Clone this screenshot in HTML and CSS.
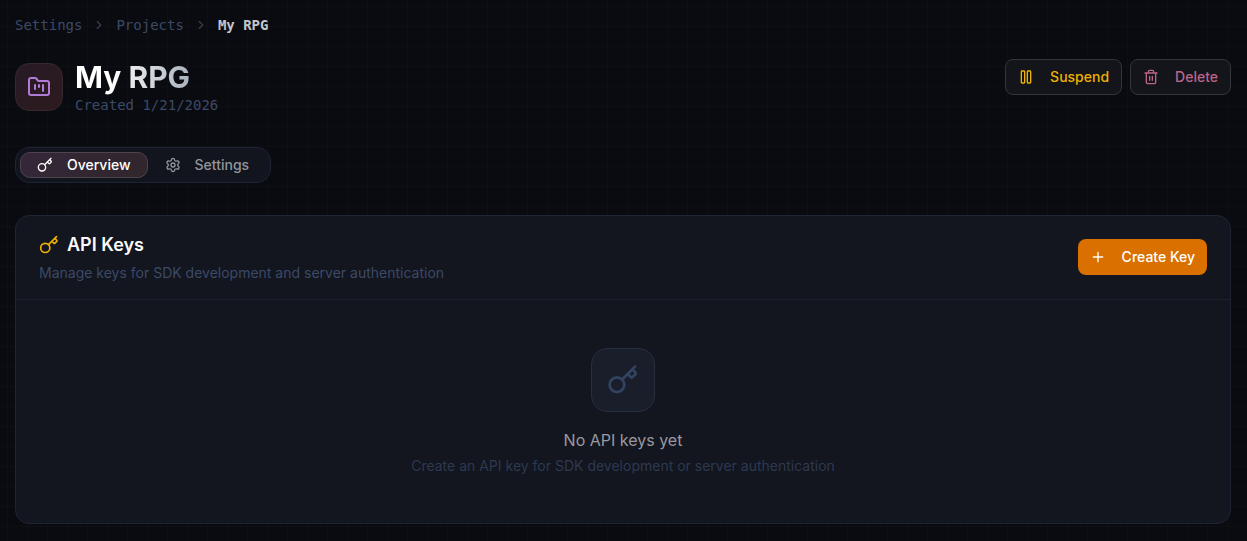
FILE: index.html
```html
<!DOCTYPE html>
<html lang="en">
<head>
    <meta charset="UTF-8">
    <meta name="viewport" content="width=device-width, initial-scale=1.0">
    <title>My RPG - Projects</title>
    <link rel="stylesheet" href="styles.css">
</head>
<body>
    <!-- Shared icons -->
    <svg class="icon-defs" aria-hidden="true">
        <symbol id="icon-key" viewBox="0 0 24 24">
            <circle cx="7.5" cy="15.5" r="5.5"/>
            <path d="m21 2-9.6 9.6M15.5 7.5l2.3 2.3a1 1 0 0 0 1.4 0l2.1-2.1a1 1 0 0 0 0-1.4L19 4"/>
        </symbol>
        <symbol id="icon-chevron" viewBox="0 0 24 24">
            <path d="m9 18 6-6-6-6"/>
        </symbol>
    </svg>

    <main class="page">
        <nav class="breadcrumb" aria-label="Breadcrumb">
            <a href="#settings">Settings</a>
            <svg class="icon-sm"><use href="#icon-chevron"/></svg>
            <a href="#projects">Projects</a>
            <svg class="icon-sm"><use href="#icon-chevron"/></svg>
            <span class="current">My RPG</span>
        </nav>

        <header class="project-header">
            <div class="project-info">
                <div class="project-icon">
                    <svg class="icon-lg" viewBox="0 0 24 24">
                        <path d="M4 20h16a2 2 0 0 0 2-2V8a2 2 0 0 0-2-2h-7.9a2 2 0 0 1-1.7-.9l-.8-1.2A2 2 0 0 0 7.9 3H4a2 2 0 0 0-2 2v13c0 1.1.9 2 2 2ZM8 10v4M12 10v2M16 10v6"/>
                    </svg>
                </div>
                <div>
                    <h1>My RPG</h1>
                    <p class="created">Created 1/21/2026</p>
                </div>
            </div>
            <div class="actions">
                <button type="button" class="btn btn-suspend">
                    <svg class="icon" viewBox="0 0 24 24">
                        <rect x="5" y="3" width="5" height="18" rx="1"/>
                        <rect x="14" y="3" width="5" height="18" rx="1"/>
                    </svg>
                    Suspend
                </button>
                <button type="button" class="btn btn-delete">
                    <svg class="icon" viewBox="0 0 24 24">
                        <path d="M3 6h18M19 6v14a2 2 0 0 1-2 2H7a2 2 0 0 1-2-2V6M8 6V4a2 2 0 0 1 2-2h4a2 2 0 0 1 2 2v2M10 11v6M14 11v6"/>
                    </svg>
                    Delete
                </button>
            </div>
        </header>

        <div class="tabs" role="tablist">
            <button type="button" class="tab active" role="tab" aria-selected="true">
                <svg class="icon"><use href="#icon-key"/></svg>
                Overview
            </button>
            <button type="button" class="tab" role="tab" aria-selected="false">
                <svg class="icon" viewBox="0 0 24 24">
                    <path d="M9.67 4.14a2.34 2.34 0 0 1 4.66 0 2.34 2.34 0 0 0 3.32 1.91 2.34 2.34 0 0 1 2.33 4.04 2.34 2.34 0 0 0 0 3.82 2.34 2.34 0 0 1-2.33 4.04 2.34 2.34 0 0 0-3.32 1.91 2.34 2.34 0 0 1-4.66 0 2.34 2.34 0 0 0-3.32-1.91 2.34 2.34 0 0 1-2.33-4.04 2.34 2.34 0 0 0 0-3.82 2.34 2.34 0 0 1 2.33-4.04 2.34 2.34 0 0 0 3.32-1.91Z"/>
                    <circle cx="12" cy="12" r="3"/>
                </svg>
                Settings
            </button>
        </div>

        <section class="card">
            <div class="card-header">
                <div>
                    <h2>
                        <svg class="icon-md"><use href="#icon-key"/></svg>
                        API Keys
                    </h2>
                    <p class="description">Manage keys for SDK development and server authentication</p>
                </div>
                <button type="button" class="btn btn-create">
                    <svg class="icon" viewBox="0 0 24 24"><path d="M5 12h14M12 5v14"/></svg>
                    Create Key
                </button>
            </div>
            <div class="empty">
                <div class="empty-icon">
                    <svg class="icon-xl"><use href="#icon-key"/></svg>
                </div>
                <p class="empty-title">No API keys yet</p>
                <p class="empty-text">Create an API key for SDK development or server authentication</p>
            </div>
        </section>
    </main>
</body>
</html>
```
FILE: styles.css
```css
* {
    box-sizing: border-box;
}

body {
    margin: 0;
    min-height: 100vh;
    background-color: #0a0b10;
    background-image:
        linear-gradient(rgba(255, 255, 255, 0.016) 1px, transparent 1px),
        linear-gradient(90deg, rgba(255, 255, 255, 0.016) 1px, transparent 1px);
    background-size: 20px 20px;
    background-position: 7px 6px;
    color: #fafafa;
    font-family: Inter, sans-serif;
    font-size: 14px;
    line-height: 20px;
}

h1, h2, p {
    margin: 0;
}

svg {
    flex-shrink: 0;
    fill: none;
    stroke: currentColor;
    stroke-width: 2;
    stroke-linecap: round;
    stroke-linejoin: round;
}

.icon-defs {
    display: none;
}

.icon-sm {
    width: 14px;
    height: 14px;
}

.icon {
    width: 16px;
    height: 16px;
}

.icon-md {
    width: 20px;
    height: 20px;
}

.icon-lg {
    width: 24px;
    height: 24px;
}

.icon-xl {
    width: 32px;
    height: 32px;
}

.page {
    padding: 15px 16px 17px 15px;
}

/* Breadcrumb */
.breadcrumb {
    display: flex;
    align-items: center;
    gap: 10px;
    margin-bottom: 24px;
    color: #334155;
    font-family: "DejaVu Sans Mono", monospace;
}

.breadcrumb a {
    color: #3b4a66;
    text-decoration: none;
}

.breadcrumb .current {
    color: #c4c6ca;
    font-weight: 700;
}

/* Project header */
.project-header {
    display: flex;
    align-items: flex-start;
    justify-content: space-between;
    margin-bottom: 32px;
}

.project-info {
    display: flex;
    align-items: center;
    gap: 12px;
}

.project-icon {
    display: flex;
    align-items: center;
    justify-content: center;
    width: 48px;
    height: 48px;
    border: 1px solid #38272f;
    border-radius: 14px;
    background: linear-gradient(135deg, #281b28, #2c1a1c);
    color: #b07cd8;
}

h1 {
    width: fit-content;
    background: linear-gradient(90deg, #fff 30%, #a9b2bd);
    background-clip: text;
    -webkit-background-clip: text;
    color: transparent;
    font-size: 30px;
    font-weight: 700;
    line-height: 36px;
}

.created {
    color: #3b4a66;
    font-family: "DejaVu Sans Mono", monospace;
}

.actions {
    display: flex;
    gap: 8px;
}

.btn {
    display: inline-flex;
    align-items: center;
    gap: 16px;
    height: 36px;
    padding: 0 12px;
    border: 1px solid #34353b;
    border-radius: 8px;
    background: #14151a;
    font: 500 14px/20px Inter, sans-serif;
    cursor: pointer;
}

.btn-suspend {
    color: #efb100;
}

.btn-delete {
    color: #bd648b;
}

.btn-create {
    border: none;
    background: #d97000;
    color: #fff;
}

/* Tabs */
.tabs {
    display: flex;
    align-items: center;
    width: fit-content;
    height: 36px;
    margin-bottom: 32px;
    padding: 0 4px;
    border: 1px solid #1d2433;
    border-radius: 14px;
    background: #12141e;
}

.tab {
    display: inline-flex;
    align-items: center;
    gap: 14px;
    height: 26px;
    padding: 0 16px;
    border: 1px solid transparent;
    border-radius: 10px;
    background: none;
    color: #94969c;
    font: 500 14px/20px Inter, sans-serif;
    cursor: pointer;
}

.tab.active {
    border-color: #4d454d;
    background: linear-gradient(135deg, #35273a, #30262b);
    color: #fff;
}

/* API keys card */
.card {
    border: 1px solid #1d2534;
    border-radius: 14px;
    background: #13151f;
}

.card-header {
    display: flex;
    align-items: center;
    justify-content: space-between;
    padding: 15px 23px 16px;
    border-bottom: 1px solid #1b2331;
}

h2 {
    display: flex;
    align-items: center;
    gap: 8px;
    margin-bottom: 4px;
    font-size: 18px;
    font-weight: 600;
    line-height: 28px;
}

h2 svg {
    color: #efb100;
}

.description {
    color: #3b4a66;
}

.empty {
    padding: 48px 24px 47px;
    text-align: center;
}

.empty-icon {
    display: flex;
    align-items: center;
    justify-content: center;
    width: 64px;
    height: 64px;
    margin: 0 auto 16px;
    border: 1px solid #262f40;
    border-radius: 16px;
    background: #1a1e2a;
    color: #334462;
}

.empty-title {
    margin-bottom: 4px;
    color: #989aa0;
    font-size: 16px;
    line-height: 24px;
}

.empty-text {
    color: #2d3a50;
}
```
